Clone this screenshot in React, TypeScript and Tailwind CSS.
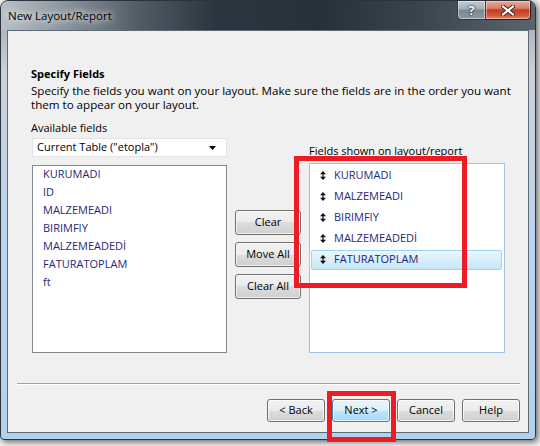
import React from "react";

const leftItems = ["KURUMADI", "ID", "MALZEMEADI", "BIRIMFIY", "MALZEMEADEDİ", "FATURATOPLAM", "ft"];
const rightItems = ["KURUMADI", "MALZEMEADI", "BIRIMFIY", "MALZEMEADEDİ", "FATURATOPLAM"];

function Btn({ label, className = "", primary = false }: { label: string; className?: string; primary?: boolean }) {
  return (
    <div
      className={
        "flex items-center justify-center rounded-[3px] border text-[11px] text-black shadow-[inset_0_0_0_1px_rgba(255,255,255,0.7)] " +
        (primary
          ? "border-[#3c7fb1] bg-[linear-gradient(to_bottom,#eaf6fd_0%,#d9f0fc_50%,#bee6fd_50%,#a7d9f5_100%)] "
          : "border-[#707070] bg-[linear-gradient(to_bottom,#f2f2f2_0%,#ebebeb_50%,#dddddd_50%,#cfcfcf_100%)] ") +
        className
      }
    >
      {label}
    </div>
  );
}

function UpDown() {
  return (
    <svg width="6" height="9" viewBox="0 0 6 9" className="shrink-0">
      <path d="M3 0 L6 3.2 H0 Z M3 9 L0 5.8 H6 Z" fill="#111" />
      <rect x="2.4" y="3" width="1.2" height="3" fill="#111" />
    </svg>
  );
}

export default function App() {
  return (
    <div className="relative w-[540px] h-[446px] bg-[#f3f3f3] overflow-hidden font-['Open_Sans','Noto_Sans',sans-serif]">
      <div className="w-[536px] h-[440px] rounded-t-[8px] rounded-b-[4px] border border-[#2b343d] shadow-[2px_2px_6px_rgba(0,0,0,0.6)] bg-[linear-gradient(to_bottom,#9aa5ae_0px,#c9d0d6_70px,#bdd4ec_220px,#b3d0ef_100%)] flex flex-col overflow-hidden">
        {/* title bar */}
        <div className="h-[29px] flex justify-between items-start bg-[linear-gradient(to_right,#b9c1c7_0%,#8a959d_12%,#505b64_26%,#2c3640_40%,#27313a_60%,#3a444d_78%,#5a656e_100%)]">
          <div className="pl-[7px] pt-[7px] text-[11.5px] leading-[16px] text-black [text-shadow:0_0_6px_rgba(255,255,255,0.95),0_0_10px_rgba(255,255,255,0.8)]">
            New Layout/Report
          </div>
          <div className="flex mr-[4px] -mt-[1px]">
            <div className="w-[29px] h-[20px] rounded-bl-[4px] border border-[#30393f] bg-[linear-gradient(to_bottom,#c4ccd2_0%,#a2adb5_45%,#7b8790_50%,#8e9aa2_100%)] shadow-[inset_0_0_0_1px_rgba(255,255,255,0.45)] flex items-center justify-center text-white font-bold text-[13px] leading-none [text-shadow:0_0_2px_#000,0_0_1px_#000]">
              ?
            </div>
            <div className="w-[45px] h-[20px] rounded-br-[4px] border border-l-0 border-[#3a1810] bg-[linear-gradient(to_bottom,#e9a99a_0%,#d8806b_40%,#c23d22_50%,#d2563a_80%,#e48a6c_100%)] shadow-[inset_0_0_0_1px_rgba(255,255,255,0.4)] flex items-center justify-center">
              <svg width="14" height="11" viewBox="0 0 14 11">
                <path d="M2 1.5 L12 9.5 M12 1.5 L2 9.5" stroke="#3b1d16" strokeWidth="4" strokeLinecap="square" />
                <path d="M2 1.5 L12 9.5 M12 1.5 L2 9.5" stroke="#ffffff" strokeWidth="2.2" strokeLinecap="square" />
              </svg>
            </div>
          </div>
        </div>

        {/* client area */}
        <div className="mx-[6px] h-[403px] border border-[#5c6a77] bg-[#f0f0f0] flex flex-col">
          <div className="pl-[23px] pt-[35px] flex flex-col text-black">
            <div className="text-[11px] font-bold leading-[15px]">Specify Fields</div>
            <div className="mt-[3px] text-[11.6px] leading-[13.5px] whitespace-nowrap">
              Specify the fields you want on your layout. Make sure the fields are in the order you want
              <br />
              them to appear on your layout.
            </div>

            <div className="mt-[10px] flex items-start">
              {/* left column */}
              <div className="flex flex-col">
                <div className="text-[11px] leading-[14px]">Available fields</div>
                <div className="ml-[1px] mt-[3px] w-[195px] h-[19px] bg-white border border-[#e2e2e2] flex items-center justify-between pl-[4px] pr-[10px] text-[11px]">
                  <span>Current Table ("etopla")</span>
                  <svg width="7" height="4" viewBox="0 0 7 4">
                    <path d="M0 0 H7 L3.5 4 Z" fill="#000" />
                  </svg>
                </div>
                <div className="ml-[1px] mt-[8px] w-[195px] h-[188px] bg-white border border-[#828790] flex flex-col pl-[10px]">
                  {leftItems.map((t) => (
                    <div key={t} className="h-[18px] leading-[16px] text-[11px] text-[#2a1f7a]">
                      {t}
                    </div>
                  ))}
                </div>
              </div>

              {/* middle column */}
              <div className="ml-[8px] mt-[89px] flex flex-col gap-[7px]">
                <Btn label="Clear" className="w-[66px] h-[25px]" />
                <Btn label="Move All" className="w-[66px] h-[25px]" />
                <Btn label="Clear All" className="w-[66px] h-[25px]" />
              </div>

              {/* right column */}
              <div className="ml-[8px] mt-[23px] flex flex-col">
                <div className="text-[11px] leading-[14px]">Fields shown on layout/report</div>
                <div className="mt-[5px] w-[196px] h-[190px] bg-white border border-[#a3c3e2] flex flex-col pt-[1px]">
                  {rightItems.map((t, i) => (
                    <div key={t} className="h-[21px] flex items-center">
                      {i === rightItems.length - 1 ? (
                        <div className="ml-[1px] mr-[2px] flex-1 h-[20px] rounded-[2px] border border-[#9fd3f0] bg-[linear-gradient(to_bottom,#ebf7fd_0%,#d8effb_50%,#c4e6f7_100%)] flex items-center gap-[8px] pl-[8px]">
                          <UpDown />
                          <span className="text-[11px] text-[#2a1f7a]">{t}</span>
                        </div>
                      ) : (
                        <div className="flex items-center gap-[8px] pl-[10px]">
                          <UpDown />
                          <span className="text-[11px] text-[#2a1f7a]">{t}</span>
                        </div>
                      )}
                    </div>
                  ))}
                </div>
              </div>
            </div>
          </div>

          {/* separator */}
          <div className="mt-[30px] ml-[9px] mr-[8px] h-[2px] border-t border-[#a0a0a0] bg-white" />

          {/* bottom buttons */}
          <div className="mt-[14px] pr-[8px] flex justify-end gap-[7px]">
            <Btn label="< Back" className="w-[58px] h-[23px]" />
            <Btn label="Next >" primary className="w-[58px] h-[23px]" />
            <Btn label="Cancel" className="w-[58px] h-[23px]" />
            <Btn label="Help" className="w-[58px] h-[23px]" />
          </div>
        </div>
      </div>

      {/* red annotation rectangles */}
      <div className="absolute left-[294px] top-[156px] w-[173px] h-[132px] border-[5px] border-[#ed1c24]" />
      <div className="absolute left-[327px] top-[391px] w-[69px] h-[51px] border-[5px] border-[#ed1c24]" />
    </div>
  );
}
